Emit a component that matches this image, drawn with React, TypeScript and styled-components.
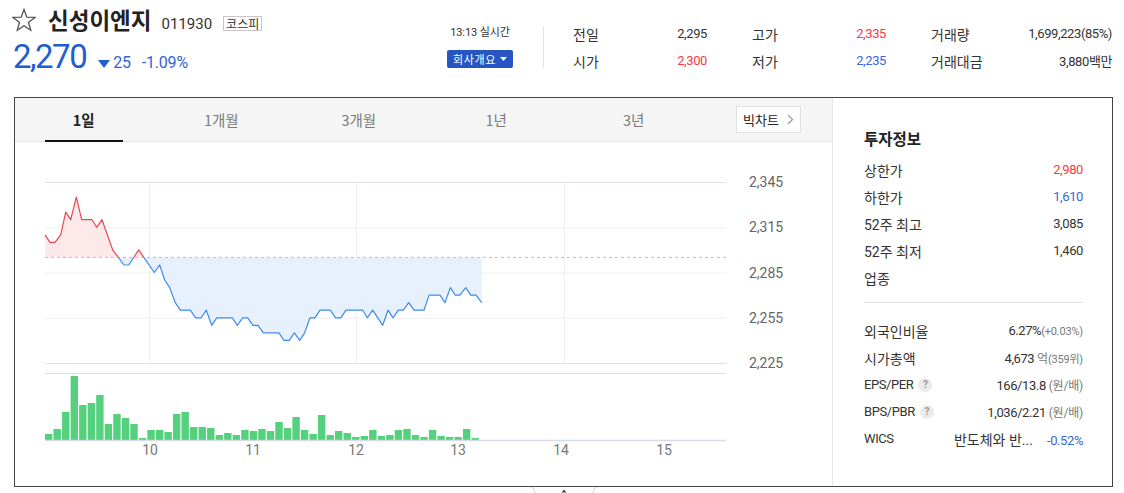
import React from "react";
import styled, { createGlobalStyle } from "styled-components";

const GlobalStyle = createGlobalStyle`
  html, body { margin: 0; padding: 0; background: #fff; }
  body {
    font-family: Roboto, "Noto Sans CJK KR", sans-serif;
    color: #333;
    font-size: 13px;
  }
  * { box-sizing: border-box; }
`;

type Tone = "up" | "down" | "plain";
const toneColor = (t: Tone = "plain") =>
  t === "up" ? "#f43b47" : t === "down" ? "#3c64dc" : "#333";

const Page = styled.div`
  width: 1124px;
  height: 493px;
  overflow: hidden;
`;

/* ---------- header ---------- */
const Header = styled.header`
  display: flex;
  height: 97px;
`;

const Identity = styled.div`
  flex: 0 0 447px;
  padding-left: 12px;
`;

const TitleRow = styled.div`
  display: flex;
  align-items: baseline;
  height: 30px;
  margin-top: 4px;
`;

const StarIcon = styled.svg`
  align-self: center;
  flex: none;
  width: 24px;
  height: 24px;
  margin-top: 2px;
`;

const Name = styled.h1`
  margin: 0 0 0 12px;
  font-family: "Noto Sans CJK KR", sans-serif;
  font-size: 22.5px;
  font-weight: 700;
  line-height: 30px;
  color: #222;
  letter-spacing: 0;
`;

const Code = styled.span`
  margin-left: 10px;
  font-size: 15px;
  color: #333;
`;

const MarketBadge = styled.span`
  margin-left: 11px;
  border: 1px solid #c8c8c8;
  padding: 0 2px;
  font-family: "Noto Sans CJK KR", sans-serif;
  font-size: 12px;
  line-height: 13px;
  color: #333;
`;

const PriceRow = styled.div`
  display: flex;
  align-items: baseline;
  margin-top: 5px;
  padding-left: 1px;
`;

const Price = styled.span`
  font-size: 33px;
  line-height: 36px;
  letter-spacing: -1.5px;
  color: #1e5ecf;
`;

const Change = styled.span`
  display: inline-flex;
  align-items: baseline;
  margin-left: 12px;
  font-size: 16px;
  letter-spacing: -0.2px;
  color: #3163d6;
`;

const DownMark = styled.svg`
  width: 12px;
  height: 8px;
  margin-right: 3px;
`;

const Rate = styled.span`
  margin-left: 11px;
`;

const MarketCol = styled.div`
  width: 66px;
  padding-top: 25px;
  display: flex;
  flex-direction: column;
  align-items: center;
`;

const LiveTime = styled.span`
  font-size: 11px;
  line-height: 16px;
  letter-spacing: -0.1px;
  color: #333;
  white-space: nowrap;
`;

const CompanyButton = styled.button`
  margin-top: 9px;
  width: 66px;
  height: 18px;
  border: 0;
  border-radius: 2px;
  background: #2756c3;
  color: #fff;
  font-family: "Noto Sans CJK KR", sans-serif;
  font-size: 11px;
  letter-spacing: 0.6px;
  display: flex;
  align-items: center;
  justify-content: center;
  gap: 4px;
  padding: 0;
`;

const Separator = styled.div`
  width: 1px;
  height: 41px;
  margin: 27px 0 0 30px;
  background: #e3e3e3;
`;

const StatsGrid = styled.div`
  display: grid;
  grid-template-columns: 134px 134px 181px;
  grid-auto-rows: 27px;
  column-gap: 45px;
  margin-left: 29px;
  padding-top: 20px;
`;

const Stat = styled.div`
  display: flex;
  align-items: center;
  justify-content: space-between;
`;

const StatLabel = styled.span`
  font-family: "Noto Sans CJK KR", sans-serif;
  font-size: 14px;
  color: #333;
`;

const StatValue = styled.span<{ $tone?: Tone }>`
  font-size: 13px;
  letter-spacing: -0.4px;
  color: ${(p) => toneColor(p.$tone)};
`;

/* ---------- chart box ---------- */
const ChartBox = styled.section`
  margin-left: 14px;
  width: 1099px;
  height: 390px;
  border: 1px solid #444;
  display: flex;
`;

const ChartColumn = styled.div`
  width: 817px;
  display: flex;
  flex-direction: column;
`;

const TabBar = styled.nav`
  height: 44px;
  background: #f5f5f5;
  border-bottom: 1px solid #e6e6e6;
  display: flex;
  align-items: center;
`;

const Tab = styled.span<{ $active?: boolean }>`
  position: relative;
  width: 137.5px;
  height: 100%;
  display: flex;
  align-items: center;
  justify-content: center;
  font-family: "Noto Sans CJK KR", sans-serif;
  font-size: 14.5px;
  font-weight: ${(p) => (p.$active ? 700 : 400)};
  color: ${(p) => (p.$active ? "#222" : "#7b7b7b")};
  &::after {
    content: "";
    display: ${(p) => (p.$active ? "block" : "none")};
    position: absolute;
    left: 50%;
    bottom: -1px;
    width: 78px;
    height: 2px;
    margin-left: -39px;
    background: #111;
  }
`;

const BigChartButton = styled.button`
  margin-left: auto;
  margin-right: 31px;
  width: 65px;
  height: 27px;
  background: #fff;
  border: 1px solid #e1e1e1;
  display: flex;
  align-items: center;
  justify-content: center;
  gap: 8px;
  padding: 0;
  font-family: "Noto Sans CJK KR", sans-serif;
  font-size: 13px;
  color: #222;
`;

const ChartSvg = styled.svg`
  display: block;
  width: 817px;
  height: 344px;
`;

const InfoPanel = styled.aside`
  flex: 1;
  border-left: 1px solid #e6e6e6;
  padding: 30px 29px 0 31px;
`;

const PanelTitle = styled.h2`
  margin: 0;
  font-family: "Noto Sans CJK KR", sans-serif;
  font-size: 15.5px;
  font-weight: 700;
  line-height: 20px;
  color: #222;
`;

const InfoList = styled.div<{ $gap: number }>`
  margin-top: ${(p) => p.$gap}px;
`;

const InfoRow = styled.div`
  height: 27px;
  display: flex;
  align-items: center;
  justify-content: space-between;
`;

const InfoLabel = styled.span<{ $latin?: boolean }>`
  display: flex;
  align-items: center;
  font-size: ${(p) => (p.$latin ? 13 : 14)}px;
  letter-spacing: ${(p) => (p.$latin ? -0.4 : 0)}px;
  color: #333;
`;

const InfoValue = styled.span<{ $tone?: Tone }>`
  display: flex;
  align-items: baseline;
  font-size: 13px;
  letter-spacing: -0.4px;
  color: ${(p) => toneColor(p.$tone)};
  white-space: nowrap;
`;

const SubNote = styled.span<{ $size?: number }>`
  font-size: ${(p) => p.$size ?? 11}px;
  color: #777;
  letter-spacing: -0.2px;
`;

const Help = styled.span`
  margin-left: 5px;
  width: 14px;
  height: 14px;
  border-radius: 50%;
  background: #ebebeb;
  color: #9a9a9a;
  font-size: 10px;
  font-weight: 700;
  letter-spacing: 0;
  display: inline-flex;
  align-items: center;
  justify-content: center;
`;

const Sector = styled.span`
  color: #333;
  margin-right: 14px;
  font-size: 14px;
  letter-spacing: 0;
`;

const Divider = styled.div`
  height: 1px;
  background: #e5e5e5;
  margin: 11px 0 0;
`;

const HandleRow = styled.div`
  margin-left: 14px;
  width: 1099px;
  display: flex;
  justify-content: center;
`;

/* ---------- chart data ---------- */
const PRICE_TOP = 2345;
const PRICE_BOTTOM = 2225;
const Y_TOP = 182;
const Y_BOTTOM = 363;
const X0 = 45;
const X1 = 726;
const BASE = 2295;
const py = (p: number) =>
  Y_TOP + ((PRICE_TOP - p) * (Y_BOTTOM - Y_TOP)) / (PRICE_TOP - PRICE_BOTTOM);

const linePts: [number, number][] = [
  [45, 2310], [50, 2305], [55, 2305], [60.7, 2310], [65.7, 2325], [70.7, 2320],
  [76.3, 2335], [81.7, 2320], [92, 2320], [96.7, 2315], [102, 2320], [107.3, 2310],
  [112.7, 2300], [124, 2290], [128.7, 2290], [138.7, 2300], [154.3, 2285],
  [159.7, 2290], [164.7, 2280], [169.7, 2275], [175.3, 2265], [180.3, 2260],
  [190.3, 2260], [195.7, 2255], [201, 2255], [206.3, 2260], [211.7, 2250],
  [216.7, 2255], [232.3, 2255], [237.3, 2250], [242.7, 2255], [247.7, 2255],
  [253, 2250], [258, 2250], [263.3, 2245], [279, 2245], [284, 2240], [289.3, 2240],
  [294.3, 2245], [299.7, 2240], [304.7, 2245], [310, 2255], [315, 2255],
  [320, 2260], [330.3, 2260], [335.7, 2255], [340.7, 2255], [346, 2260],
  [362.7, 2260], [367.3, 2255], [372.7, 2260], [382.7, 2250], [388, 2260],
  [393, 2255], [398.3, 2260], [403.3, 2260], [408.7, 2265], [414, 2260],
  [424, 2260], [429, 2270], [440, 2270], [445, 2265], [450.3, 2275],
  [455.3, 2270], [460, 2270], [465.7, 2275], [470.7, 2270], [476, 2270],
  [481.7, 2265],
];

const volumes = [
  6, 11, 28, 64, 35, 37, 45, 16, 26, 22, 16, 2, 10, 10, 8, 26, 28, 13, 13, 12,
  5, 7, 5, 10, 9, 11, 9, 18, 12, 23, 10, 6, 25, 5, 9, 7, 3, 4, 10, 4, 5, 10, 11,
  5, 3, 10, 4, 3, 3, 11, 2,
];

const priceTicks = [2345, 2315, 2285, 2255, 2225];
const hourTicks = [
  { label: "10", x: 150 }, { label: "11", x: 253 }, { label: "12", x: 356 },
  { label: "13", x: 458 }, { label: "14", x: 561 }, { label: "15", x: 664 },
];
const vGrid = [149.5, 356.5, 564.5];

const tabs = ["1일", "1개월", "3개월", "1년", "3년"];

const PriceChart: React.FC = () => {
  const baseY = py(BASE);
  const linePath = linePts.map(([x, p]) => `${x},${py(p).toFixed(1)}`).join(" ");
  const last = linePts[linePts.length - 1][0];
  const areaPath = `${linePath} ${last},${baseY} ${X0},${baseY}`;
  return (
    <ChartSvg viewBox="15 142 817 344">
      <defs>
        <clipPath id="above">
          <rect x="15" y="142" width="817" height={baseY - 142} />
        </clipPath>
        <clipPath id="below">
          <rect x="15" y={baseY} width="817" height={486 - baseY} />
        </clipPath>
      </defs>
      {vGrid.map((x) => (
        <line key={x} x1={x} x2={x} y1={Y_TOP} y2={Y_BOTTOM} stroke="#eef0f4" />
      ))}
      {priceTicks.map((p, i) => (
        <line
          key={p}
          x1={X0}
          x2={X1}
          y1={py(p) + 0.5}
          y2={py(p) + 0.5}
          stroke={i === 0 || i === priceTicks.length - 1 ? "#dde1ea" : "#efefef"}
        />
      ))}
      <polygon points={areaPath} fill="#fde8ea" clipPath="url(#above)" />
      <polygon points={areaPath} fill="#e6f1fd" clipPath="url(#below)" />
      <line
        x1={X0}
        x2={X1}
        y1={baseY}
        y2={baseY}
        stroke="#bdbdbd"
        strokeDasharray="3 3"
      />
      <polyline
        points={linePath}
        fill="none"
        stroke="#f04452"
        strokeWidth="1.2"
        strokeLinejoin="round"
        clipPath="url(#above)"
      />
      <polyline
        points={linePath}
        fill="none"
        stroke="#3d8bf0"
        strokeWidth="1.2"
        strokeLinejoin="round"
        clipPath="url(#below)"
      />
      {priceTicks.map((p) => (
        <text
          key={p}
          x="749"
          y={py(p) + 5}
          fontFamily="Roboto, sans-serif"
          fontSize="14"
          fill="#666"
        >
          {p.toLocaleString("en-US")}
        </text>
      ))}
      <line x1={X0} x2={X1} y1="373.5" y2="373.5" stroke="#dde1ea" />
      {volumes.map((h, i) => (
        <rect
          key={i}
          x={X0 + i * 8.53}
          y={440 - h}
          width="7.4"
          height={h}
          fill="#55d07d"
        />
      ))}
      <line x1={X0} x2={X1} y1="440.5" y2="440.5" stroke="#d9dce5" strokeWidth="1.5" />
      {hourTicks.map((t) => (
        <text
          key={t.label}
          x={t.x}
          y="455"
          textAnchor="middle"
          fontFamily="Roboto, sans-serif"
          fontSize="14"
          fill="#777"
        >
          {t.label}
        </text>
      ))}
    </ChartSvg>
  );
};

export default function App() {
  return (
    <Page>
      <GlobalStyle />
      <Header>
        <Identity>
          <TitleRow>
            <StarIcon viewBox="0 0 24 24">
              <polygon
                points="12,1.5 14.76,9.2 22.94,9.45 16.47,14.45 18.76,22.3 12,17.7 5.24,22.3 7.53,14.45 1.06,9.45 9.24,9.2"
                fill="none"
                stroke="#555"
                strokeWidth="1.3"
                strokeLinejoin="miter"
              />
            </StarIcon>
            <Name>신성이엔지</Name>
            <Code>011930</Code>
            <MarketBadge>코스피</MarketBadge>
          </TitleRow>
          <PriceRow>
            <Price>2,270</Price>
            <Change>
              <DownMark viewBox="0 0 12 8">
                <polygon points="0,0 12,0 6,8" fill="#1f5fcf" />
              </DownMark>
              25
              <Rate>-1.09%</Rate>
            </Change>
          </PriceRow>
        </Identity>
        <MarketCol>
          <LiveTime>13:13 실시간</LiveTime>
          <CompanyButton>
            회사개요
            <svg width="7" height="4" viewBox="0 0 7 4">
              <polygon points="0,0 7,0 3.5,4" fill="#fff" />
            </svg>
          </CompanyButton>
        </MarketCol>
        <Separator />
        <StatsGrid>
          <Stat>
            <StatLabel>전일</StatLabel>
            <StatValue>2,295</StatValue>
          </Stat>
          <Stat>
            <StatLabel>고가</StatLabel>
            <StatValue $tone="up">2,335</StatValue>
          </Stat>
          <Stat>
            <StatLabel>거래량</StatLabel>
            <StatValue>1,699,223(85%)</StatValue>
          </Stat>
          <Stat>
            <StatLabel>시가</StatLabel>
            <StatValue $tone="up">2,300</StatValue>
          </Stat>
          <Stat>
            <StatLabel>저가</StatLabel>
            <StatValue $tone="down">2,235</StatValue>
          </Stat>
          <Stat>
            <StatLabel>거래대금</StatLabel>
            <StatValue>3,880백만</StatValue>
          </Stat>
        </StatsGrid>
      </Header>

      <ChartBox>
        <ChartColumn>
          <TabBar>
            {tabs.map((t, i) => (
              <Tab key={t} $active={i === 0}>
                {t}
              </Tab>
            ))}
            <BigChartButton>
              빅차트
              <svg width="7" height="11" viewBox="0 0 7 11">
                <polyline points="1,1 5.5,5.5 1,10" fill="none" stroke="#999" strokeWidth="1.2" />
              </svg>
            </BigChartButton>
          </TabBar>
          <PriceChart />
        </ChartColumn>
        <InfoPanel>
          <PanelTitle>투자정보</PanelTitle>
          <InfoList $gap={8}>
            <InfoRow>
              <InfoLabel>상한가</InfoLabel>
              <InfoValue $tone="up">2,980</InfoValue>
            </InfoRow>
            <InfoRow>
              <InfoLabel>하한가</InfoLabel>
              <InfoValue $tone="down">1,610</InfoValue>
            </InfoRow>
            <InfoRow>
              <InfoLabel>52주 최고</InfoLabel>
              <InfoValue>3,085</InfoValue>
            </InfoRow>
            <InfoRow>
              <InfoLabel>52주 최저</InfoLabel>
              <InfoValue>1,460</InfoValue>
            </InfoRow>
            <InfoRow>
              <InfoLabel>업종</InfoLabel>
            </InfoRow>
          </InfoList>
          <Divider />
          <InfoList $gap={14}>
            <InfoRow>
              <InfoLabel>외국인비율</InfoLabel>
              <InfoValue>
                6.27%<SubNote>(+0.03%)</SubNote>
              </InfoValue>
            </InfoRow>
            <InfoRow>
              <InfoLabel>시가총액</InfoLabel>
              <InfoValue>
                4,673&nbsp;<SubNote $size={12}>억</SubNote>
                <SubNote>(359위)</SubNote>
              </InfoValue>
            </InfoRow>
            <InfoRow>
              <InfoLabel $latin>
                EPS/PER<Help>?</Help>
              </InfoLabel>
              <InfoValue>
                166/13.8&nbsp;<SubNote $size={12}>(원/배)</SubNote>
              </InfoValue>
            </InfoRow>
            <InfoRow>
              <InfoLabel $latin>
                BPS/PBR<Help>?</Help>
              </InfoLabel>
              <InfoValue>
                1,036/2.21&nbsp;<SubNote $size={12}>(원/배)</SubNote>
              </InfoValue>
            </InfoRow>
            <InfoRow>
              <InfoLabel $latin>WICS</InfoLabel>
              <InfoValue $tone="down">
                <Sector>반도체와 반...</Sector>
                -0.52%
              </InfoValue>
            </InfoRow>
          </InfoList>
        </InfoPanel>
      </ChartBox>
      <HandleRow>
        <svg width="64" height="16" viewBox="0 0 64 16">
          <line x1="0.5" y1="0" x2="7" y2="16" stroke="#cfcfcf" />
          <line x1="63.5" y1="0" x2="57" y2="16" stroke="#cfcfcf" />
          <polygon points="29.5,5.5 32,2.5 34.5,5.5" fill="#444" />
        </svg>
      </HandleRow>
    </Page>
  );
}
